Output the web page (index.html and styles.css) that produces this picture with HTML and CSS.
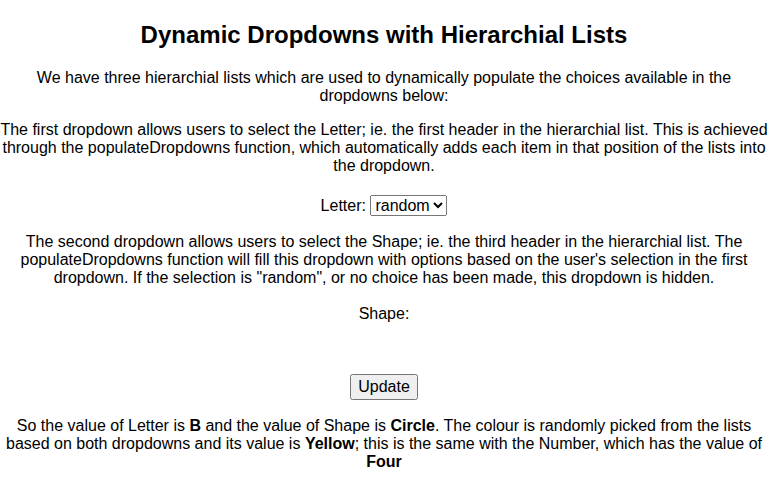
FILE: index.html
```html
<!DOCTYPE html>
<html>
<head>
<meta charset="utf-8">
<link rel="stylesheet" href="styles.css">
</head>
<body>
<h2 class="title">Dynamic Dropdowns with Hierarchial Lists</h2>
<p>We have three hierarchial lists which are used to dynamically populate the choices available in the dropdowns below:</p>
<p>The first dropdown allows users to select the Letter; ie. the first header in the hierarchial list. This is achieved through the populateDropdowns function, which automatically adds each item in that position of the lists into the dropdown.</p>
<p class="letter">Letter: <select class="control"><option>random</option><option>A</option><option>B</option></select></p>
<p>The second dropdown allows users to select the Shape; ie. the third header in the hierarchial list. The populateDropdowns function will fill this dropdown with options based on the user's selection in the first dropdown. If the selection is "random", or no choice has been made, this dropdown is hidden.</p>
<p class="shape">Shape: <select class="control hidden"></select></p>
<div class="spacer"></div>
<p class="actions"><button class="control update">Update</button></p>
<p class="result">So the value of Letter is <b>B</b> and the value of Shape is <b>Circle</b>. The colour is randomly picked from the lists based on both dropdowns and its value is <b>Yellow</b>; this is the same with the Number, which has the value of <b>Four</b></p>
</body>
</html>
```
FILE: styles.css
```css
body {
  margin: 0;
  font-family: "Liberation Sans", Arial, sans-serif;
  font-size: 16px;
  color: #000;
  background: #fff;
  text-align: center;
}
.title {
  font-size: 24px;
  margin: 21px 0 20px;
}
p {
  margin: 16px 0;
}
.letter {
  margin: 20px 0 17px;
}
.shape {
  margin-top: 18px;
}
.result {
  margin-top: 17px;
}
.control {
  font-family: "Liberation Sans", Arial, sans-serif;
  font-size: 16px;
}
.update {
  padding: 2px 6px;
}
.hidden {
  display: none;
}
.spacer {
  height: 19px;
}
```
